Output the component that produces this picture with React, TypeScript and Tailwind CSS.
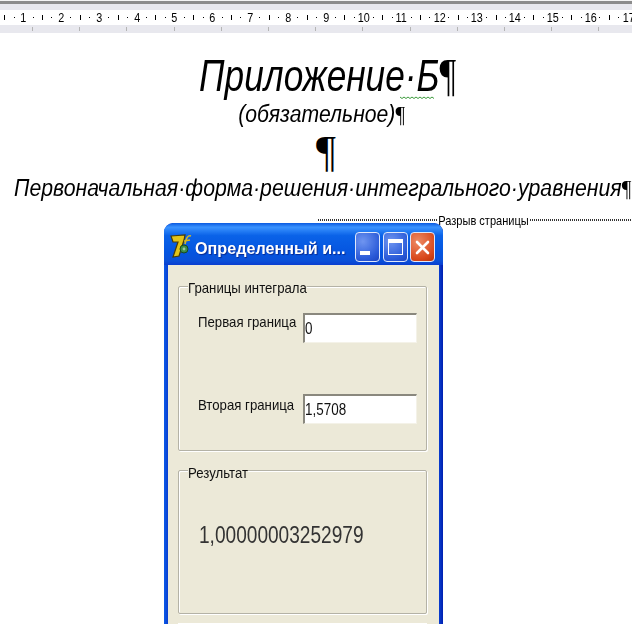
const rulerNumbers = [1, 2, 3, 4, 5, 6, 7, 8, 9, 10, 11, 12, 13, 14, 15, 16, 17];

function RulerDot() {
  return (
    <div className="w-[9.45px] shrink-0 flex justify-center">
      <div className="w-px h-px bg-black" />
    </div>
  );
}

function Ruler() {
  return (
    <div className="shrink-0">
      <div className="h-px bg-[#f4f4f4]" />
      <div className="h-[3px] bg-[#8c8c8c]" />
      <div className="h-[6px] bg-[#e8e8ee]" />
      <div className="h-[15px] bg-white flex items-center overflow-hidden">
        {rulerNumbers.map((n) => (
          <div key={n} className="flex items-center shrink-0 w-[37.8px]">
            <div className="w-[9.45px] shrink-0 flex justify-center">
              <div className="w-px h-[5px] bg-black" />
            </div>
            <RulerDot />
            <div className="w-[9.45px] shrink-0 flex justify-center text-[12px] leading-none text-black">
              <span className="shrink-0 scale-x-90">{n}</span>
            </div>
            <RulerDot />
          </div>
        ))}
      </div>
      <div className="h-2 bg-[#e8e8ee] flex items-start pt-[2px] pl-[9px] overflow-hidden">
        {Array.from({ length: 13 }).map((_, i) => (
          <div key={i} className="w-[47.2px] shrink-0 flex justify-center">
            <div className="w-px h-[4px] bg-[#b4b4b4]" />
          </div>
        ))}
      </div>
    </div>
  );
}

function Squiggle() {
  return (
    <svg className="absolute left-[400px] top-[-3px]" width="34" height="3" viewBox="0 0 34 3">
      <path
        d="M0 1 L2 2.5 L4 1 L6 2.5 L8 1 L10 2.5 L12 1 L14 2.5 L16 1 L18 2.5 L20 1 L22 2.5 L24 1 L26 2.5 L28 1 L30 2.5 L32 1 L34 2.5"
        fill="none"
        stroke="#3c9a3c"
        strokeWidth="1"
      />
    </svg>
  );
}

function PageBreak() {
  return (
    <div className="flex items-center pl-[318px] h-[6px] mt-[15px]">
      <div className="w-[119px] h-[2px] bg-[repeating-linear-gradient(90deg,#333_0_1px,transparent_1px_2px)]" />
      <span className="text-[13px] leading-none text-black scale-x-[.85] whitespace-nowrap w-[93px] flex justify-center shrink-0">
        Разрыв страницы
      </span>
      <div className="flex-1 h-[2px] bg-[repeating-linear-gradient(90deg,#333_0_1px,transparent_1px_2px)]" />
    </div>
  );
}

function DelphiIcon() {
  return (
    <svg width="24" height="24" viewBox="0 0 24 24" className="shrink-0">
      <path d="M1 2 L15 1 L14 6 L9 22 L3 23 L8 8 L3 8 Z" fill="#e4c418" stroke="#4a3c06" strokeWidth="1.2" />
      <path d="M15 10 C16 4 18 1 21 2 M14 7 L20 6" fill="none" stroke="#d8b820" strokeWidth="1.6" />
      <circle cx="14" cy="15" r="4" fill="#3c8c48" stroke="#184a20" />
      <circle cx="14" cy="15" r="1.4" fill="#98c8a0" />
    </svg>
  );
}

function TitleButton({ kind }: { kind: 'min' | 'max' | 'close' }) {
  const tone =
    kind === 'close'
      ? 'bg-[radial-gradient(circle_at_30%_30%,#ee8a64,#d8481c_70%,#b83208)]'
      : 'bg-[radial-gradient(circle_at_30%_30%,#6f95f0,#2a5ad8_70%,#1c44c0)]';
  return (
    <div className={`w-[25px] h-[30px] rounded-[4px] border border-[#dfe8fb] flex items-center justify-center ${tone}`}>
      {kind === 'min' && <div className="w-[10px] h-[4px] bg-white self-end mb-[6px] mr-[5px]" />}
      {kind === 'max' && <div className="w-[15px] h-[16px] border border-white border-t-[4px]" />}
      {kind === 'close' && (
        <svg width="15" height="15" viewBox="0 0 15 15">
          <path d="M2 2 L13 13 M13 2 L2 13" stroke="#fff" strokeWidth="2.6" strokeLinecap="round" />
        </svg>
      )}
    </div>
  );
}

function GroupBox({
  title,
  titleTop,
  className,
  children,
}: {
  title: string;
  titleTop: string;
  className: string;
  children: React.ReactNode;
}) {
  return (
    <div className={`relative border border-[#b4b2a6] rounded-[2px] shadow-[inset_1px_1px_0_#fff,1px_1px_0_#fff] ${className}`}>
      <span className={`absolute left-[9px] bg-[#ece9d8] origin-left scale-x-[.88] text-[15px] leading-[16px] text-[#111] whitespace-nowrap ${titleTop}`}>
        {title}
      </span>
      {children}
    </div>
  );
}

function Field({ label, value, labelClass }: { label: string; value: string; labelClass: string }) {
  return (
    <div className="flex items-start">
      <span className={`flex-1 min-w-0 text-[15px] leading-[16px] text-[#111] origin-left scale-x-[.88] whitespace-nowrap ${labelClass}`}>
        {label}
      </span>
      <div className="shrink-0 w-[114px] h-[30px] bg-white border-t-2 border-l-2 border-[#8a887e] border-r border-b border-r-[#f4f2e8] border-b-[#f4f2e8] flex items-center text-[16px] text-[#111]">
        <span className="origin-left scale-x-[.84]">{value}</span>
      </div>
    </div>
  );
}

function AppWindow() {
  return (
    <div className="ml-[164px] w-[279px] h-[420px] rounded-t-[9px] bg-[linear-gradient(90deg,#0a5ae8_0,#0a3ed0_4px,#0a3ed0_275px,#0020b0_279px)] px-[4px] blur-[0.35px] overflow-hidden">
      <div className="-mx-[4px] h-[42px] rounded-t-[9px] bg-[linear-gradient(180deg,#0a5ae0_0%,#3a93ff_10%,#0a62e8_30%,#0555e0_70%,#0a50d8_90%,#0a3ed0_100%)] flex items-start pt-[11px] pl-[6px] pr-[8px]">
        <DelphiIcon />
        <span className="ml-[1px] mt-[6px] flex-1 min-w-0 origin-left scale-x-[.95] text-[17px] leading-none font-bold text-white [text-shadow:1px_1px_1px_#0a2a90] whitespace-nowrap">
          Определенный и...
        </span>
        <div className="flex gap-[2.5px] -mt-[2px] shrink-0">
          <TitleButton kind="min" />
          <TitleButton kind="max" />
          <TitleButton kind="close" />
        </div>
      </div>
      <div className="bg-[#ece9d8] h-full pt-[21px] pl-[10px] pr-[12px]">
        <GroupBox title="Границы интеграла" titleTop="top-[-7px]" className="h-[165px] pt-[26px] pl-[19px] pr-[9px]">
          <Field label="Первая граница" value="0" labelClass="pt-[1px]" />
          <div className="h-[51px]" />
          <Field label="Вторая граница" value="1,5708" labelClass="pt-[3px]" />
        </GroupBox>
        <GroupBox title="Результат" titleTop="top-[-6px]" className="mt-[19px] h-[144px] pt-[52px] pl-[20px]">
          <div className="origin-left scale-x-[.83] text-[23px] leading-[24px] text-[#333] whitespace-nowrap">
            1,00000003252979
          </div>
        </GroupBox>
        <div className="mt-[9px] h-4 bg-white" />
      </div>
    </div>
  );
}

export default function App() {
  return (
    <div className="w-[632px] h-[624px] bg-white overflow-hidden font-['Liberation_Sans',Arial,sans-serif] text-black">
      <Ruler />
      <div className="text-center italic whitespace-nowrap">
        <div className="mt-[19px] h-[47px] pl-[24px] text-[44px] leading-[47px]">
          <span className="inline-block scale-x-[.8]">
            Приложение·Б<span className="not-italic font-['Liberation_Serif',serif] text-[46px]">¶</span>
          </span>
        </div>
        <div className="relative h-0 text-left">
          <Squiggle />
        </div>
        <div className="mt-[2px] h-[27px] pl-[12px] text-[23px] leading-[27px]">
          <span className="inline-block scale-x-[.92]">
            (обязательное)<span className="not-italic font-['Liberation_Serif',serif]">¶</span>
          </span>
        </div>
        <div className="h-[47px] pl-[20px] text-[44px] leading-[47px] not-italic font-['Liberation_Serif',serif]">¶</div>
        <div className="h-[27px] text-[23px] leading-[27px] text-left pl-[14px]">
          <span className="inline-block origin-left scale-x-[.924]">
            Первоначальная·форма·решения·интегрального·уравнения
            <span className="not-italic font-['Liberation_Serif',serif]">¶</span>
          </span>
        </div>
      </div>
      <PageBreak />
      <AppWindow />
    </div>
  );
}
